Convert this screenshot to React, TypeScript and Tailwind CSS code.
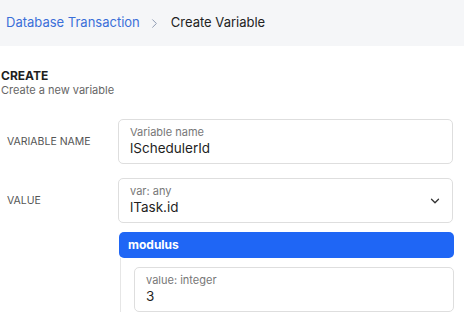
import { ChevronDown, ChevronRight } from "lucide-react";

const font = { fontFamily: "Inter, 'Noto Sans', sans-serif" };

function Field({ label, value, select }: { label: string; value: string; select?: boolean }) {
  return (
    <div className="flex h-[45px] items-center rounded-[5px] border border-[#dedede] bg-white pl-[11px] pr-[10px]">
      <div className="flex flex-1 flex-col self-start pt-[5px]">
        <span className="text-[11px] leading-[14px] text-[#777]">{label}</span>
        <span className="text-[13.5px] leading-[18px] text-[#1f1f1f]">{value}</span>
      </div>
      {select && <ChevronDown size={14} strokeWidth={2.2} className="text-[#333]" />}
    </div>
  );
}

export default function App() {
  return (
    <div style={font} className="h-[330px] w-[464px] overflow-hidden bg-white">
      <div className="flex h-[46px] items-center bg-[#f5f6f8] pl-[6px] text-[13px]">
        <span className="text-[#3a6fd8]">Database Transaction</span>
        <ChevronRight size={15} strokeWidth={1.6} className="ml-[7px] mr-[9px] text-[#8f9bb3]" />
        <span className="text-[#222]">Create Variable</span>
      </div>

      <div className="pt-[22px] pl-[1px]">
        <div className="text-[12px] font-bold leading-[15px] text-[#1f1f1f]">CREATE</div>
        <div className="text-[11px] leading-[15px] text-[#666]">Create a new variable</div>
      </div>

      <div className="mt-[21px] flex flex-col gap-[14px] pr-[11px]">
        <div className="flex items-center">
          <div className="w-[118px] pl-[7px] text-[10.5px] text-[#555]">VARIABLE NAME</div>
          <div className="flex-1">
            <Field label="Variable name" value="lSchedulerId" />
          </div>
        </div>
        <div className="flex items-center">
          <div className="w-[118px] pl-[7px] text-[10.5px] text-[#555]">VALUE</div>
          <div className="flex-1">
            <Field label="var: any" value="lTask.id" select />
          </div>
        </div>
      </div>

      <div className="ml-[119px] mr-[10px] mt-[9px]">
        <div className="flex h-[26px] items-center rounded-[5px] bg-[#1f66f5] pl-[9px] text-[12px] font-bold text-white">
          modulus
        </div>
        <div className="ml-[1px] border-l border-[#e6e6e6] pt-[9px] pl-[13px]">
          <Field label="value: integer" value="3" />
        </div>
      </div>
    </div>
  );
}
